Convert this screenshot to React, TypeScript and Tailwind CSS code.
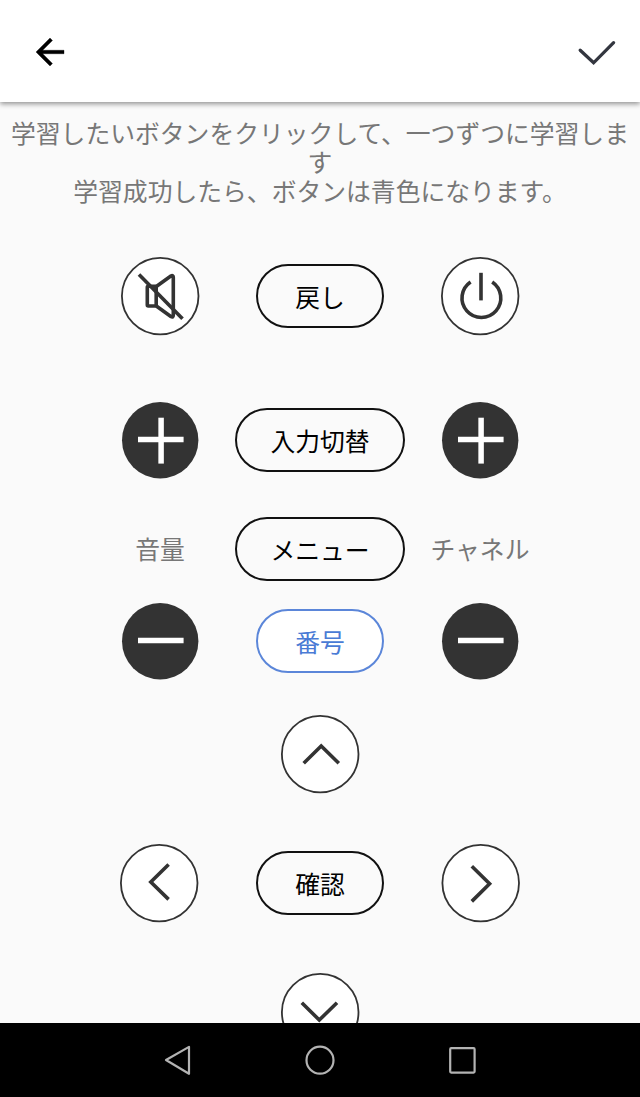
import type { ReactNode } from "react";

const INK = "#333333";

function Pill({ children, wide, active }: { children: ReactNode; wide?: boolean; active?: boolean }) {
  return (
    <button
      type="button"
      className={`flex h-16 shrink-0 items-center justify-center rounded-full border-2 text-[24.8px] leading-none ${
        wide ? "w-[170px]" : "w-32"
      } ${active ? "border-[#5b86d9] bg-white text-[#4a7bd5]" : "border-[#111111] text-black"}`}
    >
      {children}
    </button>
  );
}

function Round({ label, cx = 40.2, children }: { label: string; cx?: number; children: ReactNode }) {
  return (
    <button type="button" aria-label={label} className="size-20">
      <svg viewBox="0 0 80 80" className="size-20" fill="none" stroke={INK} strokeWidth="3.6">
        <circle cx={cx} cy="40.1" r="38.3" fill="#ffffff" strokeWidth="1.8" />
        {children}
      </svg>
    </button>
  );
}

function Step({ label, plus }: { label: string; plus?: boolean }) {
  return (
    <button type="button" aria-label={label} className="size-20">
      <svg viewBox="0 0 80 80" className="size-20" fill="none" stroke="#ffffff" strokeWidth="5.5">
        <circle cx="40.2" cy="40.2" r="38.2" fill={INK} stroke="none" />
        <path d="M18 39.5H63.6" />
        {plus && <path d="M41.1 17.7V63.6" />}
      </svg>
    </button>
  );
}

function Row({ children, className }: { children: ReactNode; className: string }) {
  return (
    <div className={`grid shrink-0 grid-cols-[160px_160px_160px] place-items-center justify-center ${className}`}>
      {children}
    </div>
  );
}

export default function App() {
  return (
    <div className="flex h-[1097px] w-full flex-col overflow-hidden bg-[#fafafa] font-['Noto_Sans_CJK_JP','Noto_Sans',sans-serif] text-[24.8px]">
      <header className="z-10 flex h-[102px] shrink-0 items-center justify-between bg-white pr-5 pl-[29px] pt-[2px] shadow-[0_2px_5px_rgba(0,0,0,0.42)]">
        <button type="button" aria-label="戻る">
          <svg viewBox="0 0 24 24" className="size-[42px]" fill="#000000" stroke="#000000" strokeWidth="0.2">
            <path d="M20 11H7.83l5.59-5.59L12 4l-8 8 8 8 1.41-1.41L7.83 13H20z" />
          </svg>
        </button>
        <button type="button" aria-label="完了">
          <svg viewBox="0 0 48 48" className="size-12" fill="none" stroke="#33363f" strokeWidth="3.3" strokeLinecap="round">
            <path d="M8.2 22.2 21.6 34.8 41.6 14.7" />
          </svg>
        </button>
      </header>

      <main className="flex min-h-0 flex-1 flex-col overflow-hidden">
        <p className="h-[154px] shrink-0 px-2 pt-[16px] text-center leading-[29px] text-[#777777]">
          学習したいボタンをクリックして、一つずつに学習します
          <br />
          学習成功したら、ボタンは青色になります。
        </p>

        <Row className="h-20">
          <Round label="消音">
            <rect x="27.3" y="30.3" width="8.9" height="19.7" rx="1" />
            <path d="M36.3 30.5 50.8 20Q53.3 18.6 53.3 21.5V59Q53.3 62 50.8 60.5L36.3 50" />
            <path d="M19 18.4 62.5 62.8" />
          </Round>
          <Pill>戻し</Pill>
          <Round label="電源">
            <path d="M41 16.8V44.4" />
            <path d="M30.6 26A19.4 19.4 0 1 0 52.2 26" />
          </Round>
        </Row>

        <Row className="mt-16 h-20">
          <Step label="音量を上げる" plus />
          <Pill wide>入力切替</Pill>
          <Step label="次のチャネル" plus />
        </Row>

        <Row className="mt-[37px] h-16 text-[#777777]">
          <span className="pb-px leading-none">音量</span>
          <Pill wide>メニュー</Pill>
          <span className="pb-px leading-none">チャネル</span>
        </Row>

        <Row className="mt-5 h-20">
          <Step label="音量を下げる" />
          <Pill active>番号</Pill>
          <Step label="前のチャネル" />
        </Row>

        <div className="mt-[33px] flex h-20 shrink-0 justify-center">
          <Round label="上">
            <path d="M23.7 49.2 41.2 32 58.8 49.2" />
          </Round>
        </div>

        <Row className="mt-[49px] h-20">
          <Round label="左" cx={39.2}>
            <path d="M48.6 21.5 30.8 39 48.6 56.4" />
          </Round>
          <Pill>確認</Pill>
          <Round label="右" cx={40.7}>
            <path d="M31.8 23.2 49.6 40.8 31.8 58.4" />
          </Round>
        </Row>

        <div className="mt-[49px] flex h-20 shrink-0 justify-center">
          <Round label="下">
            <path d="M21.8 30.8 39.3 48 57 30.8" />
          </Round>
        </div>
      </main>

      <nav className="flex h-[74px] shrink-0 items-center justify-center gap-[110px] bg-black">
        <svg viewBox="0 0 32 32" className="size-8" fill="none" stroke="#b3b3b3" strokeWidth="2.2" strokeLinejoin="round">
          <path d="M4 16 27 2.9V29.8Z" />
        </svg>
        <svg viewBox="0 0 32 32" className="size-8" fill="none" stroke="#b3b3b3" strokeWidth="2.2">
          <circle cx="16" cy="16.2" r="13.5" />
        </svg>
        <svg viewBox="0 0 32 32" className="size-8" fill="none" stroke="#b3b3b3" strokeWidth="2.2">
          <rect x="4.2" y="4.2" width="24.4" height="24.4" rx="1" />
        </svg>
      </nav>
    </div>
  );
}
